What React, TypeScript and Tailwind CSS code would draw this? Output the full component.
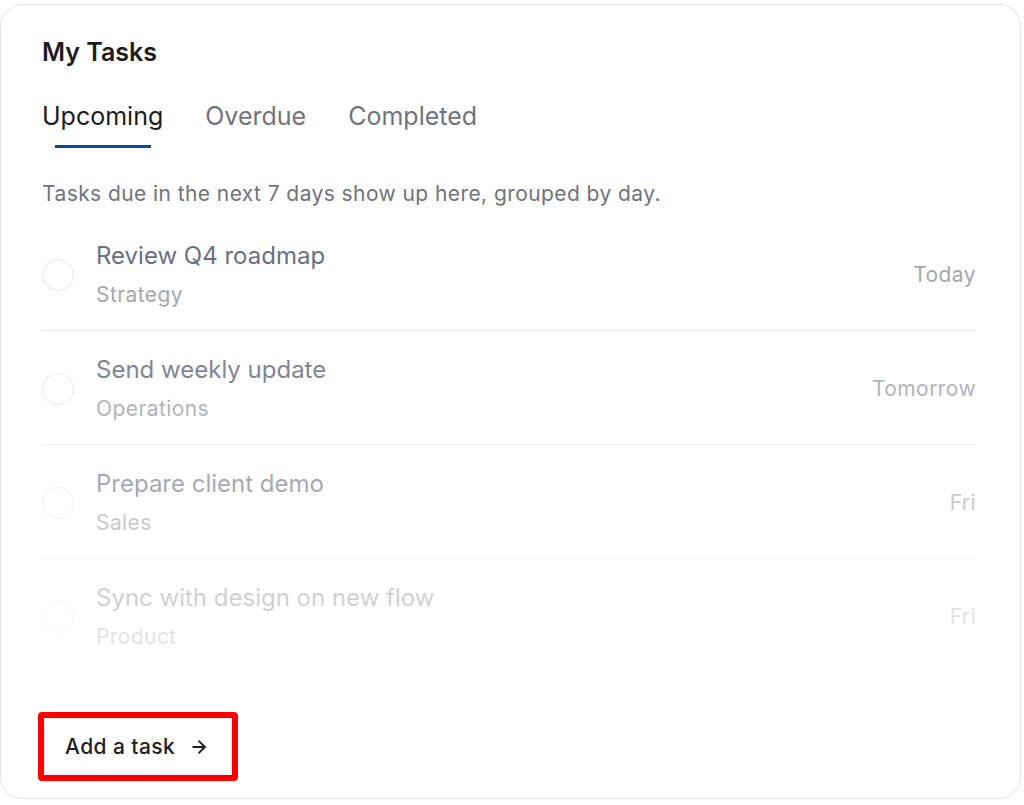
import { ArrowRight } from 'lucide-react';

const tabs = ['Upcoming', 'Overdue', 'Completed'];

const tasks = [
  { title: 'Review Q4 roadmap', area: 'Strategy', due: 'Today', fade: 'opacity-100' },
  { title: 'Send weekly update', area: 'Operations', due: 'Tomorrow', fade: 'opacity-[0.85]' },
  { title: 'Prepare client demo', area: 'Sales', due: 'Fri', fade: 'opacity-[0.6]' },
  { title: 'Sync with design on new flow', area: 'Product', due: 'Fri', fade: 'opacity-[0.32]' },
];

export default function App() {
  return (
    <div className="h-[805px] w-[1024px] bg-white pt-1 font-['Inter',sans-serif] antialiased">
      <div className="flex h-[795px] w-[1021px] flex-col rounded-[22px] border border-[#e4e4e6] px-[41px] pt-[31px]">
        <h2 className="text-[25px] leading-8 font-semibold text-[#1c1c1e]">My Tasks</h2>

        <div className="mt-8 flex gap-[42px]">
          {tabs.map((tab, i) => (
            <div key={tab} className="relative flex flex-col items-center">
              <span
                className={
                  i === 0
                    ? 'text-[25px] leading-8 text-[#1c1c1e]'
                    : 'text-[25px] leading-8 text-[#70737b]'
                }
              >
                {tab}
              </span>
              {i === 0 && <span className="mt-[13px] h-[3px] w-24 bg-[#0d47a1]" />}
            </div>
          ))}
        </div>

        <p className="mt-[32px] text-[21px] leading-7 tracking-[0.02em] text-[#6f737b]">
          Tasks due in the next 7 days show up here, grouped by day.
        </p>

        <ul className="mt-[9px] w-[934px]">
          {tasks.map((t, i) => (
            <li
              key={t.title}
              className={`flex items-center pt-[23px] pb-[21px] ${t.fade} ${i < tasks.length - 1 ? 'border-b border-[#ececee]' : ''}`}
            >
              <span className="h-8 w-8 shrink-0 rounded-full border-[1.5px] border-[#e6e7ea]" />
              <div className="ml-[22px] flex flex-1 flex-col gap-[9px]">
                <span className="text-[24px] leading-8 text-[#6b7080]">{t.title}</span>
                <span className="text-[21px] leading-7 tracking-[0.02em] text-[#a4a7ae]">{t.area}</span>
              </div>
              <span className="text-[21px] leading-7 tracking-[0.02em] text-[#a4a7ae]">{t.due}</span>
            </li>
          ))}
        </ul>

        <div className="mt-auto mb-[17px] -ml-[4px] w-fit rounded-[4px] border-[6px] border-[#ff0000]">
          <button className="flex h-[57px] items-center gap-[14px] rounded-md border border-[#ededef] bg-white pr-[22px] pl-[20px] text-[21px] font-medium tracking-[0.02em] text-[#1f2024]">
            Add a task
            <ArrowRight className="h-5 w-5" strokeWidth={2.25} />
          </button>
        </div>
      </div>
    </div>
  );
}
